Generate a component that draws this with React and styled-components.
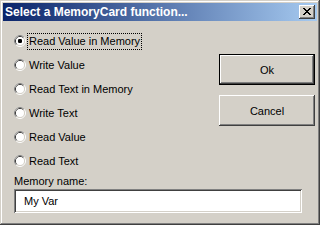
import React, { useState } from 'react';
import styled, { createGlobalStyle } from 'styled-components';

const GlobalStyle = createGlobalStyle`
  html, body {
    margin: 0;
    padding: 0;
    background: #d4d0c8;
  }
  body {
    font-family: Tahoma, "Liberation Sans", Arial, sans-serif;
    font-size: 11px;
    color: #000;
  }
`

const options = [
  'Read Value in Memory',
  'Write Value',
  'Read Text in Memory',
  'Write Text',
  'Read Value',
  'Read Text',
]

const RadioMark = ({ checked }) => (
  <svg width="12" height="12" viewBox="0 0 12 12">
    <circle cx="6" cy="6" r="5.5" fill="none" stroke="#fff" />
    <path d="M2.11 9.89 A5.5 5.5 0 0 1 9.89 2.11" fill="none" stroke="#808080" />
    <circle cx="6" cy="6" r="4.5" fill="none" stroke="#d4d0c8" />
    <path d="M2.82 9.18 A4.5 4.5 0 0 1 9.18 2.82" fill="none" stroke="#404040" />
    <circle cx="6" cy="6" r="4" fill="#fff" />
    {checked && <rect x="4" y="4" width="4" height="4" rx="1.2" fill="#000" />}
  </svg>
)

const CloseGlyph = () => (
  <svg width="8" height="7" viewBox="0 0 8 7">
    <path d="M0 0h2v1h1v1h2V1h1V0h2v1H7v1H6v1H5v1h1v1h1v1h1v1H6V6H5V5H3v1H2v1H0V6h1V5h1V4h1V3H2V2H1V1H0z" fill="#000" />
  </svg>
)

export default () => {
  const [ selected, setSelected ] = useState(0)
  const [ name, setName ] = useState('My Var')

  return (
    <>
      <GlobalStyle />
      <Window>
        <TitleBar>
          <Title>Select a MemoryCard function...</Title>
          <CloseButton><CloseGlyph /></CloseButton>
        </TitleBar>
        <Client>
          <TopRow>
            <RadioList>
              {options.map((label, i) => (
                <RadioRow key={label} onClick={() => setSelected(i)}>
                  <RadioMark checked={selected === i} />
                  <RadioLabel focused={selected === i}>{label}</RadioLabel>
                </RadioRow>
              ))}
            </RadioList>
            <ButtonColumn>
              <PushButton isDefault>Ok</PushButton>
              <PushButton>Cancel</PushButton>
            </ButtonColumn>
          </TopRow>
          <FieldLabel htmlFor="memname">Memory name:</FieldLabel>
          <TextField id="memname" value={name} onChange={(e) => setName(e.target.value)} />
        </Client>
      </Window>
    </>
  )
}

const Window = styled.div`
  width: 320px;
  height: 225px;
  box-sizing: border-box;
  padding: 3px;
  background: #d4d0c8;
  box-shadow: inset -1px -1px #404040, inset 1px 1px #d4d0c8,
    inset -2px -2px #808080, inset 2px 2px #fff;
  display: flex;
  flex-direction: column;
`

const TitleBar = styled.div`
  height: 18px;
  margin-bottom: 1px;
  background: linear-gradient(to right, #0a246a, #a6caf0);
  display: flex;
  align-items: center;
  justify-content: space-between;
  padding: 0 2px;
`

const Title = styled.span`
  color: #fff;
  font-weight: bold;
  font-size: 12px;
  line-height: 14px;
`

const CloseButton = styled.div`
  width: 16px;
  height: 14px;
  box-sizing: border-box;
  background: #d4d0c8;
  box-shadow: inset -1px -1px #404040, inset 1px 1px #fff,
    inset -2px -2px #808080, inset 2px 2px #d4d0c8;
  display: flex;
  align-items: center;
  justify-content: center;
  padding: 0 1px 1px 0;
`

const Client = styled.div`
  flex: 1;
  display: flex;
  flex-direction: column;
  padding: 7px 2px 0 11px;
`

const TopRow = styled.div`
  display: flex;
  justify-content: space-between;
`

const RadioList = styled.div`
  display: flex;
  flex-direction: column;
`

const RadioRow = styled.div`
  height: 24px;
  display: flex;
  align-items: center;
  gap: 1px;
  cursor: default;
`

const RadioLabel = styled.span`
  border: 1px dotted ${(p) => (p.focused ? '#000' : 'transparent')};
  padding: 1px 1px;
  line-height: 13px;
`

const ButtonColumn = styled.div`
  display: flex;
  flex-direction: column;
  gap: 10px;
  padding-top: 25px;
`

const PushButton = styled.button`
  width: 96px;
  height: 31px;
  box-sizing: border-box;
  border: ${(p) => (p.isDefault ? '1px solid #000' : 'none')};
  background: #d4d0c8;
  box-shadow: inset -1px -1px #404040, inset 1px 1px #fff,
    inset -2px -2px #808080, inset 2px 2px #d4d0c8;
  font-family: inherit;
  font-size: 11px;
  color: #000;
  padding: 0;
`

const FieldLabel = styled.label`
  display: block;
  margin-top: 2px;
  line-height: 13px;
`

const TextField = styled.input`
  width: 288px;
  height: 24px;
  box-sizing: border-box;
  margin-top: 1px;
  border: none;
  outline: none;
  background: #fff;
  box-shadow: inset 1px 1px #808080, inset -1px -1px #fff,
    inset 2px 2px #404040, inset -2px -2px #d4d0c8;
  font-family: inherit;
  font-size: 11px;
  color: #000;
  padding: 0 0 0 10px;
`
